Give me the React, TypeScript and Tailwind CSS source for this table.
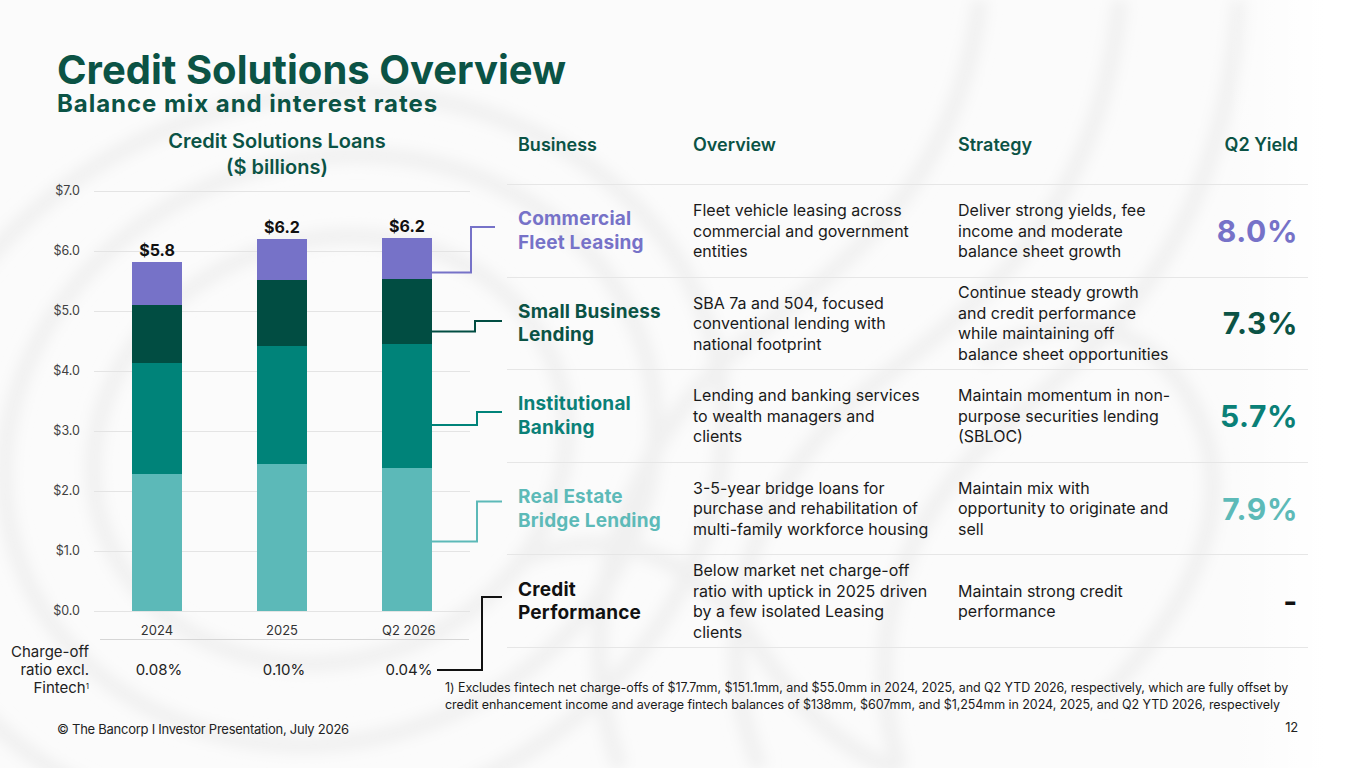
import React from 'react';

const bars = [
  { year: '2024', total: '$5.8', chargeOff: '0.08%', seg: [43, 58, 111, 137] },
  { year: '2025', total: '$6.2', chargeOff: '0.10%', seg: [41, 66, 118, 147] },
  { year: 'Q2 2026', total: '$6.2', chargeOff: '0.04%', seg: [41, 65, 124, 143] },
];

const segColors = ['bg-[#7672c8]', 'bg-[#014d42]', 'bg-[#008379]', 'bg-[#5cb9b8]'];

const yTicks = ['$7.0', '$6.0', '$5.0', '$4.0', '$3.0', '$2.0', '$1.0', '$0.0'];

const rows = [
  {
    name: ['Commercial', 'Fleet Leasing'],
    color: 'text-[#7672c8]',
    overview: ['Fleet vehicle leasing across', 'commercial and government', 'entities'],
    strategy: ['Deliver strong yields, fee', 'income and moderate', 'balance sheet growth'],
    yieldVal: '8.0%',
  },
  {
    name: ['Small Business', 'Lending'],
    color: 'text-[#0b5345]',
    overview: ['SBA 7a and 504, focused', 'conventional lending with', 'national footprint'],
    strategy: [
      'Continue steady growth',
      'and credit performance',
      'while maintaining off',
      'balance sheet opportunities',
    ],
    yieldVal: '7.3%',
  },
  {
    name: ['Institutional', 'Banking'],
    color: 'text-[#0a8077]',
    overview: ['Lending and banking services', 'to wealth managers and', 'clients'],
    strategy: ['Maintain momentum in non-', 'purpose securities lending', '(SBLOC)'],
    yieldVal: '5.7%',
  },
  {
    name: ['Real Estate', 'Bridge Lending'],
    color: 'text-[#5dbab8]',
    overview: [
      '3-5-year bridge loans for',
      'purchase and rehabilitation of',
      'multi-family workforce housing',
    ],
    strategy: ['Maintain mix with', 'opportunity to originate and', 'sell'],
    yieldVal: '7.9%',
  },
  {
    name: ['Credit', 'Performance'],
    color: 'text-[#111111]',
    overview: [
      'Below market net charge-off',
      'ratio with uptick in 2025 driven',
      'by a few isolated Leasing',
      'clients',
    ],
    strategy: ['Maintain strong credit', 'performance'],
    yieldVal: '-',
  },
];

function Lines({ lines }: { lines: string[] }) {
  return (
    <>
      {lines.map((l, i) => (
        <span key={i} className="block whitespace-nowrap">
          {l}
        </span>
      ))}
    </>
  );
}

function Backdrop() {
  return (
    <svg className="absolute inset-0 h-full w-full" viewBox="0 0 1365 768" fill="none">
      <defs>
        <filter id="soft" x="-20%" y="-20%" width="140%" height="140%">
          <feGaussianBlur stdDeviation="7" />
        </filter>
        <linearGradient id="edge" x1="0" x2="1" y1="0" y2="0">
          <stop offset="0.9" stopColor="#ffffff" stopOpacity="0" />
          <stop offset="0.97" stopColor="#ffffff" stopOpacity="1" />
        </linearGradient>
      </defs>
      <g filter="url(#soft)" stroke="#f0f0f0" strokeWidth="16">
        <ellipse cx="330" cy="450" rx="240" ry="210" transform="rotate(-20 330 450)" />
        <ellipse cx="330" cy="450" rx="330" ry="290" transform="rotate(-20 330 450)" />
        <ellipse cx="310" cy="460" rx="420" ry="360" transform="rotate(-20 310 460)" />
        <path d="M620 768 C 560 600 640 420 760 330 S 960 160 980 0" />
        <path d="M760 768 C 700 620 760 470 880 380 S 1100 200 1120 0" />
        <path d="M900 768 C 860 640 900 520 1000 430 S 1220 260 1240 0" />
        <path d="M520 560 C 620 520 700 560 760 650 S 880 768 900 768" />
        <path d="M980 360 C 1060 300 1160 320 1200 420 S 1180 620 1100 700" />
      </g>
      <rect x="0" y="0" width="1365" height="768" fill="url(#edge)" />
    </svg>
  );
}

function Chart() {
  return (
    <div className="flex w-[507px] shrink-0 flex-col">
      <div className="mt-[8px] w-[554px] text-center text-[20px] font-semibold leading-[26px] text-[#0b5345]">
        <div>Credit Solutions Loans</div>
        <div>($ billions)</div>
      </div>

      <div className="relative mt-[11px] ml-[94px] h-[421px] w-[376px]">
        <div className="absolute inset-0 flex flex-col justify-between">
          {yTicks.map((t) => (
            <div key={t} className="relative h-px bg-[#e4e4e4]">
              <span className="absolute right-[calc(100%+14px)] top-[-8px] text-[12.5px] leading-[16px] text-[#404040]">
                {t}
              </span>
            </div>
          ))}
        </div>
        <div className="absolute inset-x-0 top-0 bottom-[1px] flex items-end gap-[75px] pl-[38px]">
          {bars.map((b) => (
            <div key={b.year} className="flex w-[50px] flex-col items-center">
              <span className="mb-[2px] text-[16px] font-bold leading-[20px] text-[#111111]">
                {b.total}
              </span>
              {b.seg.map((h, i) => (
                <div key={i} className={`w-full ${segColors[i]}`} style={{ height: h }} />
              ))}
            </div>
          ))}
        </div>
      </div>

      <div className="mt-[10px] ml-[132px] flex gap-[75px]">
        {bars.map((b) => (
          <div
            key={b.year}
            className="w-[50px] text-center text-[13px] leading-[16px] whitespace-nowrap text-[#333333]"
          >
            {b.year}
          </div>
        ))}
      </div>
      <div className="mt-px ml-[100px] h-px w-[369px] bg-[#d6d6d6]" />

      <div className="mt-[3px] flex">
        <div className="w-[89px] text-right text-[15px] leading-[18px] text-[#222222]">
          <div>Charge-off</div>
          <div>ratio excl.</div>
          <div>
            Fintech<sup className="text-[8px]">1</sup>
          </div>
        </div>
        <div className="ml-[45px] flex gap-[75px] pt-[18px]">
          {bars.map((b) => (
            <div
              key={b.year}
              className="w-[50px] text-center text-[15px] leading-[18px] whitespace-nowrap text-[#222222]"
            >
              {b.chargeOff}
            </div>
          ))}
        </div>
      </div>
    </div>
  );
}

function Table() {
  return (
    <div className="flex w-[801px] flex-col">
      <div className="grid h-[65px] grid-cols-[175px_265px_1fr_auto] border-b border-[#e6e6e6] pt-[13px] pr-[10px] pl-[11px] text-[18px] font-semibold leading-[24px] text-[#0b5345]">
        <div>Business</div>
        <div>Overview</div>
        <div>Strategy</div>
        <div className="text-right">Q2 Yield</div>
      </div>
      {rows.map((r) => (
        <div
          key={r.name.join(' ')}
          className="grid h-[92.6px] grid-cols-[175px_265px_1fr_auto] items-center border-b border-[#e6e6e6] pr-[10px] pl-[11px]"
        >
          <div className={`text-[19px] font-bold leading-[23.5px] tracking-[0.01em] ${r.color}`}>
            <Lines lines={r.name} />
          </div>
          <div className="text-[16px] leading-[20.5px] text-[#1a1a1a]">
            <Lines lines={r.overview} />
          </div>
          <div className="text-[16px] leading-[20.5px] text-[#1a1a1a]">
            <Lines lines={r.strategy} />
          </div>
          <div
            className={`text-right text-[30px] font-bold leading-[36px] tracking-[0.02em] ${r.color}`}
          >
            {r.yieldVal}
          </div>
        </div>
      ))}
      <div className="mt-[31px] -ml-[62px] text-[12.5px] leading-[17px] tracking-[-0.005em] whitespace-nowrap text-[#1a1a1a]">
        <div>
          1) Excludes fintech net charge-offs of $17.7mm, $151.1mm, and $55.0mm in 2024, 2025, and
          Q2 YTD 2026, respectively, which are fully offset by
        </div>
        <div>
          credit enhancement income and average fintech balances of $138mm, $607mm, and $1,254mm
          in 2024, 2025, and Q2 YTD 2026, respectively
        </div>
      </div>
    </div>
  );
}

function Connectors() {
  return (
    <svg
      className="pointer-events-none absolute inset-0 h-full w-full"
      viewBox="0 0 1365 768"
      fill="none"
      strokeWidth="2"
    >
      <path d="M432 272.5 H471 V227 H495" stroke="#7672c8" />
      <path d="M432 331.5 H475 V321 H502" stroke="#014d42" />
      <path d="M432 425 H477 V412 H502" stroke="#008379" />
      <path d="M432 541.5 H477 V501.5 H502" stroke="#5cb9b8" />
      <path d="M437 670 H482 V597 H502" stroke="#111111" />
    </svg>
  );
}

export default function App() {
  return (
    <div
      className="relative flex h-[768px] w-[1365px] flex-col overflow-hidden bg-[#fbfbfb] pt-[50px]"
      style={{ fontFamily: 'Inter, "Noto Sans", sans-serif' }}
    >
      <Backdrop />
      <div className="relative flex flex-col pl-[57px] text-[#0b5345]">
        <h1 className="text-[40px] font-bold leading-[40px]">Credit Solutions Overview</h1>
        <h2 className="mt-[2px] text-[24px] font-bold leading-[24px] tracking-[0.04em]">
          Balance mix and interest rates
        </h2>
      </div>

      <div className="relative mt-[4px] flex">
        <Chart />
        <Table />
      </div>

      <div className="relative mt-auto flex items-center justify-between pr-[67px] pb-[31px] pl-[57px] text-[13px] leading-[16px] tracking-[-0.02em] text-[#222222]">
        <span>© The Bancorp I Investor Presentation, July 2026</span>
        <span className="-mt-[4px]">12</span>
      </div>

      <Connectors />
    </div>
  );
}
